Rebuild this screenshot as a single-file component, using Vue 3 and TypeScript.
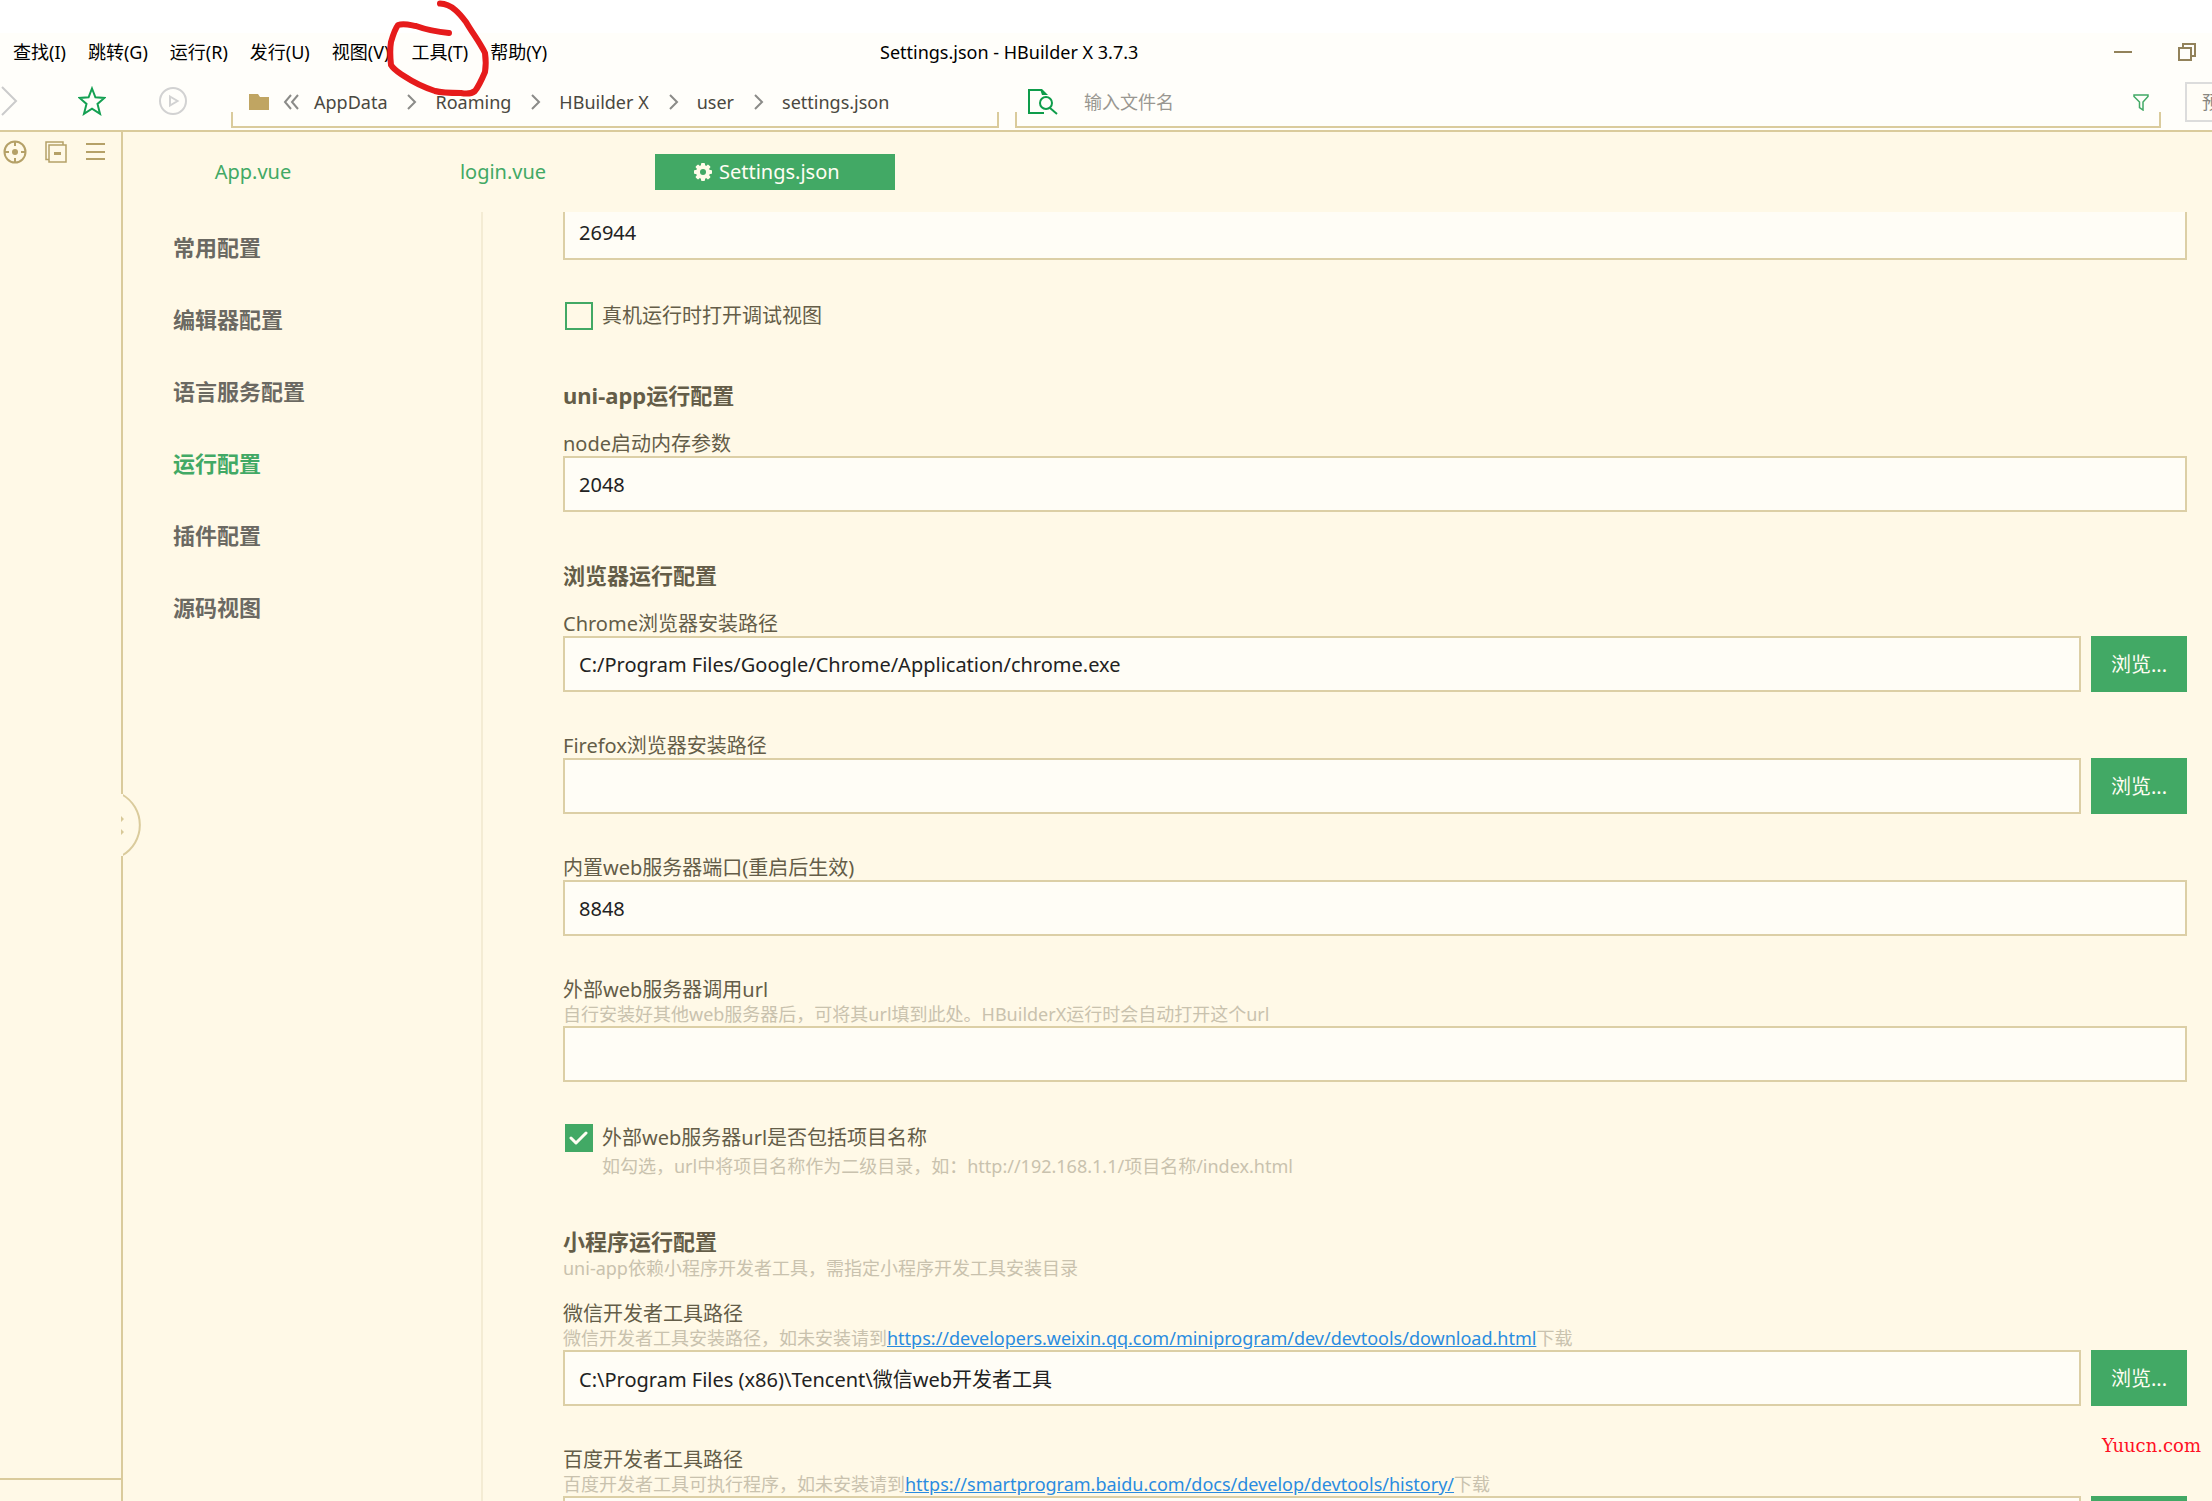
<script setup lang="ts">
import { reactive, ref } from 'vue'

interface Field {
  id: string
  kind: 'text' | 'path' | 'check'
  label?: string
  hint?: string
  link?: string
  hintEnd?: string
}

interface Section {
  title?: string
  note?: string
  fields: Field[]
}

const menus = ['查找(I)', '跳转(G)', '运行(R)', '发行(U)', '视图(V)', '工具(T)', '帮助(Y)']
const crumbs = ['AppData', 'Roaming', 'HBuilder X', 'user', 'settings.json']
const groups = ['常用配置', '编辑器配置', '语言服务配置', '运行配置', '插件配置', '源码视图']
const activeGroup = ref('运行配置')
const fileQuery = ref('')

const values = reactive<Record<string, string>>({
  port: '26944',
  memory: '2048',
  chrome: 'C:/Program Files/Google/Chrome/Application/chrome.exe',
  firefox: '',
  webPort: '8848',
  webUrl: '',
  weixin: 'C:\\Program Files (x86)\\Tencent\\微信web开发者工具',
  baidu: '',
})

const checks = reactive<Record<string, boolean>>({
  debugView: false,
  withName: true,
})

const sections: Section[] = [
  {
    fields: [
      { id: 'port', kind: 'text' },
      { id: 'debugView', kind: 'check', label: '真机运行时打开调试视图' },
    ],
  },
  {
    title: 'uni-app运行配置',
    fields: [{ id: 'memory', kind: 'text', label: 'node启动内存参数' }],
  },
  {
    title: '浏览器运行配置',
    fields: [
      { id: 'chrome', kind: 'path', label: 'Chrome浏览器安装路径' },
      { id: 'firefox', kind: 'path', label: 'Firefox浏览器安装路径' },
      { id: 'webPort', kind: 'text', label: '内置web服务器端口(重启后生效)' },
      {
        id: 'webUrl',
        kind: 'text',
        label: '外部web服务器调用url',
        hint: '自行安装好其他web服务器后，可将其url填到此处。HBuilderX运行时会自动打开这个url',
      },
      {
        id: 'withName',
        kind: 'check',
        label: '外部web服务器url是否包括项目名称',
        hint: '如勾选，url中将项目名称作为二级目录，如：http://192.168.1.1/项目名称/index.html',
      },
    ],
  },
  {
    title: '小程序运行配置',
    note: 'uni-app依赖小程序开发者工具，需指定小程序开发工具安装目录',
    fields: [
      {
        id: 'weixin',
        kind: 'path',
        label: '微信开发者工具路径',
        hint: '微信开发者工具安装路径，如未安装请到',
        link: 'https://developers.weixin.qq.com/miniprogram/dev/devtools/download.html',
        hintEnd: '下载',
      },
      {
        id: 'baidu',
        kind: 'path',
        label: '百度开发者工具路径',
        hint: '百度开发者工具可执行程序，如未安装请到',
        link: 'https://smartprogram.baidu.com/docs/develop/devtools/history/',
        hintEnd: '下载',
      },
    ],
  },
]
</script>

<template>
  <div class="app">
    <header class="titlebar">
      <nav class="menus">
        <button v-for="m in menus" :key="m" type="button" class="menu">{{ m }}</button>
      </nav>
      <span class="title">Settings.json - HBuilder X 3.7.3</span>
      <div class="window-buttons">
        <button type="button" class="icon-button" aria-label="minimize">
          <svg width="18" height="18" viewBox="0 0 18 18"><path d="M0 9h18" stroke="#92825a" stroke-width="2" /></svg>
        </button>
        <button type="button" class="icon-button" aria-label="restore">
          <svg width="18" height="18" viewBox="0 0 18 18" fill="none" stroke="#92825a" stroke-width="2">
            <path d="M1 5h12v12H1zM5 5V1h12v12h-4" />
          </svg>
        </button>
      </div>
    </header>

    <div class="toolbar">
      <div class="tools">
        <button type="button" class="icon-button" aria-label="forward">
          <svg width="18" height="30" viewBox="0 0 18 30" fill="none" stroke="#cbcbcb" stroke-width="2">
            <path d="M2 1l14 14L2 29" />
          </svg>
        </button>
        <button type="button" class="icon-button star" aria-label="favorite">
          <svg width="28" height="30" viewBox="0 0 28 30" fill="none" stroke="#14a052" stroke-width="2">
            <path d="M14 2.5l3.4 8.8 9 .6-6.9 6 2.5 9.9L14 22.6l-8 5.2 2.5-9.9-6.9-6 9-.6z" />
          </svg>
        </button>
        <button type="button" class="icon-button" aria-label="run">
          <svg width="30" height="30" viewBox="0 0 30 30" fill="none" stroke="#d2d2d2" stroke-width="2">
            <circle cx="15" cy="15" r="13" />
            <path d="M12 10.5l7.500 4.500-7.500 4.500z" />
          </svg>
        </button>
      </div>

      <nav class="box address">
        <svg class="folder" width="20" height="16" viewBox="0 0 20 16"><path d="M0 0h9l2 3h9v13H0z" fill="#c0a562" /></svg>
        <svg class="back" width="16" height="16" viewBox="0 0 16 16" fill="none" stroke="#8b8b88" stroke-width="2">
          <path d="M8 1L2 8l6 7M15 1L9 8l6 7" />
        </svg>
        <template v-for="(c, i) in crumbs" :key="c">
          <svg v-if="i > 0" class="sep" width="10" height="16" viewBox="0 0 10 16" fill="none" stroke="#8b8b88" stroke-width="2">
            <path d="M1 1l7 7-7 7" />
          </svg>
          <button type="button" class="crumb">{{ c }}</button>
        </template>
      </nav>

      <label class="box search">
        <svg width="30" height="28" viewBox="0 0 30 28" fill="none" stroke="#0e9c4a" stroke-width="2">
          <path d="M16 25H1V2h12" />
          <path d="M12 1h2l6 6h-6z" fill="#0e9c4a" stroke="none" />
          <circle cx="18" cy="15" r="6" />
          <path d="M22 20l7 6" />
        </svg>
        <input v-model="fileQuery" type="text" placeholder="输入文件名" />
        <svg width="16" height="17" viewBox="0 0 16 17" fill="none" stroke="#42a965" stroke-width="1.500">
          <path d="M1 1h14v1.500L10 8v8l-3.500-2.500V8L1 2.500z" />
        </svg>
      </label>
      <button type="button" class="preview">预</button>
    </div>

    <div class="body">
      <aside class="explorer">
        <div class="explorer-tools">
          <button type="button" class="icon-button" aria-label="locate">
            <svg width="24" height="24" viewBox="0 0 24 24" fill="none" stroke="#b5a168" stroke-width="2">
              <circle cx="12" cy="12" r="10.500" />
              <circle cx="12" cy="12" r="3" fill="#b5a168" stroke="none" />
              <path d="M12 2v4M12 18v4M2 12h4M18 12h4" />
            </svg>
          </button>
          <button type="button" class="icon-button" aria-label="collapse">
            <svg width="22" height="22" viewBox="0 0 22 22" fill="none" stroke="#b5a168" stroke-width="1.500">
              <path d="M4 18.500H1V1h17v3" />
              <path d="M4 4h17v17H4z" />
              <path d="M9 12.500h7" stroke-width="3" />
            </svg>
          </button>
          <button type="button" class="icon-button" aria-label="menu">
            <svg width="20" height="22" viewBox="0 0 20 22" stroke="#b5a168" stroke-width="2">
              <path d="M1 3h19M1 11h19M1 18h19" />
            </svg>
          </button>
        </div>
        <div class="explorer-foot"></div>
        <button type="button" class="handle" aria-label="expand">
          <svg width="22" height="64" viewBox="0 0 22 64">
            <path d="M1 1.500A35 35 0 0 1 1 62.500" fill="#fff9e7" stroke="#dacb9c" stroke-width="2" />
            <path d="M0 1v62" stroke="#fff9e7" stroke-width="4" />
            <path d="M0 23l3 3-3 3zM0 36l3 3-3 3z" fill="#d8c998" />
          </svg>
        </button>
      </aside>

      <main class="editor">
        <nav class="tabs">
          <button type="button" class="tab">App.vue</button>
          <button type="button" class="tab">login.vue</button>
          <button type="button" class="tab current">
            <svg width="18" height="18" viewBox="0 0 18 18">
              <g fill="#fffbe9">
                <rect v-for="a in [0, 45, 90, 135]" :key="a" x="7" y="0" width="4" height="18" rx="1" :transform="`rotate(${a} 9 9)`" />
                <circle cx="9" cy="9" r="7" />
              </g>
              <circle cx="9" cy="9" r="3" fill="#42a965" />
            </svg>
            Settings.json
          </button>
        </nav>

        <div class="settings">
          <nav class="groups">
            <button
              v-for="g in groups"
              :key="g"
              type="button"
              class="group"
              :class="{ active: g === activeGroup }"
              @click="activeGroup = g"
            >
              {{ g }}
            </button>
          </nav>

          <form class="form" @submit.prevent>
            <section v-for="(s, i) in sections" :key="i" class="section">
              <h2 v-if="s.title">{{ s.title }}</h2>
              <p v-if="s.note" class="hint">{{ s.note }}</p>
              <div class="fields">
                <div v-for="f in s.fields" :key="f.id" class="field">
                  <template v-if="f.kind === 'check'">
                    <label class="check">
                      <span class="tick">
                        <input v-model="checks[f.id]" type="checkbox" />
                        <svg v-if="checks[f.id]" width="20" height="16" viewBox="0 0 20 16">
                          <path d="M2 8l5 5L17 3" fill="none" stroke="#fffdf3" stroke-width="3" stroke-linecap="round" stroke-linejoin="round" />
                        </svg>
                      </span>
                      <span>{{ f.label }}</span>
                    </label>
                    <p v-if="f.hint" class="hint indent">{{ f.hint }}</p>
                  </template>
                  <template v-else>
                    <label v-if="f.label" :for="f.id">{{ f.label }}</label>
                    <p v-if="f.hint" class="hint">{{ f.hint }}<a v-if="f.link" :href="f.link">{{ f.link }}</a>{{ f.hintEnd }}</p>
                    <div class="row">
                      <input :id="f.id" v-model="values[f.id]" type="text" class="value" />
                      <button v-if="f.kind === 'path'" type="button" class="browse">浏览...</button>
                    </div>
                  </template>
                </div>
              </div>
            </section>
          </form>
        </div>
      </main>
    </div>

    <svg class="scribble" width="120" height="110" viewBox="380 -8 120 110" fill="none" stroke="#e61b1b" stroke-width="6" stroke-linecap="round" stroke-linejoin="round">
      <path d="M440 3.500C452 4 460 14 466 22C473 34 479 41 485 53C486 60 486 66 485 72C482 79 479 86 475 91C471 94 466 94 461 93C450 93 442 93 435 91C423 87 413 82 404 76C398 72 394 70 391 65C390 56 390 48 391 42C393 35 395 29 398 25C404 23 410 25 416 26C427 30 438 32 449 33" />
    </svg>
    <span class="watermark">Yuucn.com</span>
  </div>
</template>

<style>
body {
  margin: 0;
}
</style>

<style scoped>
.app {
  position: relative;
  display: flex;
  flex-direction: column;
  box-sizing: border-box;
  height: 100vh;
  padding-top: 33px;
  overflow: hidden;
  background: #fff;
  color: #645d48;
  font-family: 'Noto Sans', 'Noto Sans CJK SC', sans-serif;
  font-size: 20px;
  line-height: 24px;
}

button,
input {
  margin: 0;
  padding: 0;
  border: 0;
  border-radius: 0;
  outline: 0;
  background: none;
  color: inherit;
  font: inherit;
  text-align: left;
  white-space: nowrap;
}

svg {
  display: block;
  flex: none;
}

p,
h2 {
  margin: 0;
}

.titlebar {
  display: flex;
  align-items: center;
  flex: none;
  box-sizing: border-box;
  height: 39px;
  padding: 0 16px 1px 13px;
  background: #fffefa;
  color: #000;
  font-size: 18px;
}

.menus {
  display: flex;
  gap: 22px;
  width: 867px;
}

.window-buttons {
  display: flex;
  gap: 46px;
  margin-left: auto;
}

.toolbar {
  display: flex;
  flex: none;
  box-sizing: border-box;
  height: 60px;
  border-bottom: 2px solid #dacb9c;
  background: #fffefa;
  font-size: 18px;
}

.tools {
  display: flex;
  align-items: center;
  flex: none;
  width: 231px;
}

.star {
  margin: 0 52px 0 60px;
}

.box {
  position: relative;
  display: flex;
  align-items: center;
  box-sizing: border-box;
  height: 60px;
  min-width: 0;
  color: #4a4840;
}

.box::after {
  position: absolute;
  right: 0;
  bottom: 4px;
  left: 0;
  height: 14px;
  border: solid #dacb9c;
  border-width: 0 2px 2px;
  content: '';
  pointer-events: none;
}

.address {
  flex: 0 1 768px;
  padding-left: 18px;
}

.back {
  margin: 0 15px 0 14px;
}

.sep {
  margin: 0 18px 0 20px;
}

.search {
  flex: 1;
  margin: 0 24px 0 16px;
  padding: 0 12px 0 13px;
}

.search input {
  flex: 1;
  min-width: 0;
  margin-left: 26px;
}

.search input::placeholder {
  color: #999791;
  opacity: 1;
}

.preview {
  flex: none;
  box-sizing: border-box;
  width: 27px;
  height: 40px;
  margin-top: 10px;
  padding-left: 15px;
  overflow: hidden;
  border: 2px solid #dcdcdc;
  border-right: 0;
  background: #fffdf7;
  color: #888680;
}

.body {
  display: flex;
  flex: 1;
  min-height: 0;
  background: #fff9e7;
}

.explorer {
  position: relative;
  display: flex;
  flex-direction: column;
  justify-content: space-between;
  flex: none;
  width: 121px;
  border-right: 2px solid #dacb9c;
}

.explorer-tools {
  display: flex;
  align-items: center;
  gap: 18px;
  padding: 8px 0 0 3px;
}

.explorer-foot {
  height: 21px;
  border-top: 2px solid #dacb9c;
}

.handle {
  position: absolute;
  top: 661px;
  left: 121px;
}

.editor {
  display: flex;
  flex-direction: column;
  flex: 1;
  min-width: 0;
}

.tabs {
  display: flex;
  flex: none;
  padding: 22px 0 22px 5px;
}

.tab {
  width: 250px;
  height: 36px;
  color: #42a965;
  text-align: center;
}

.current {
  display: flex;
  align-items: center;
  gap: 7px;
  width: 240px;
  box-sizing: border-box;
  margin-left: 27px;
  padding-left: 39px;
  background: #42a965;
  color: #fffdf3;
}

.settings {
  display: flex;
  flex: 1;
  min-height: 0;
}

.groups {
  display: flex;
  flex-direction: column;
  align-items: flex-start;
  flex: none;
  box-sizing: border-box;
  width: 360px;
  padding-left: 50px;
  border-right: 2px solid #f4ecd4;
}

.group {
  height: 72px;
  padding-bottom: 2px;
  color: #6b6962;
  font-size: 22px;
  font-weight: 700;
}

.active {
  color: #42a965;
}

.form {
  flex: 1;
  min-width: 0;
  padding: 0 25px 0 80px;
  overflow: hidden;
}

.section {
  margin-bottom: 48px;
}

/* The list is scrolled, so its first box is cut by the top edge. */
.section:first-child {
  margin-top: -8px;
}

h2 {
  font-size: 22px;
  font-weight: 700;
  line-height: 30px;
}

h2 ~ .fields {
  margin-top: 22px;
}

.fields {
  display: flex;
  flex-direction: column;
  gap: 42px;
}

.field > label {
  display: block;
}

.hint {
  color: #c9c2ae;
  font-size: 18px;
}

.hint a {
  color: #2a8ce0;
}

.indent {
  padding-left: 39px;
}

.row {
  display: flex;
  gap: 10px;
}

.value {
  flex: 1;
  box-sizing: border-box;
  min-width: 0;
  height: 56px;
  padding: 0 14px;
  border: 2px solid #dccfa6;
  background: #fffdf6;
  color: #222;
}

.browse {
  width: 96px;
  height: 56px;
  padding-top: 2px;
  background: #42a965;
  color: #fffdf3;
  text-align: center;
}

.field > .check {
  display: flex;
  align-items: center;
  gap: 9px;
  height: 28px;
  padding: 0 0 2px 2px;
}

.tick {
  display: grid;
  place-items: center;
}

.tick > * {
  grid-area: 1 / 1;
}

.tick input {
  box-sizing: border-box;
  width: 28px;
  height: 28px;
  border: 2px solid #42a965;
  appearance: none;
}

.tick input:checked {
  background: #42a965;
}

.tick svg {
  pointer-events: none;
}

.scribble {
  position: absolute;
  top: -8px;
  left: 380px;
  pointer-events: none;
}

.watermark {
  position: absolute;
  right: 11px;
  bottom: 43px;
  color: #ff1024;
  font-family: 'DejaVu Serif', serif;
  font-size: 18px;
}
</style>
